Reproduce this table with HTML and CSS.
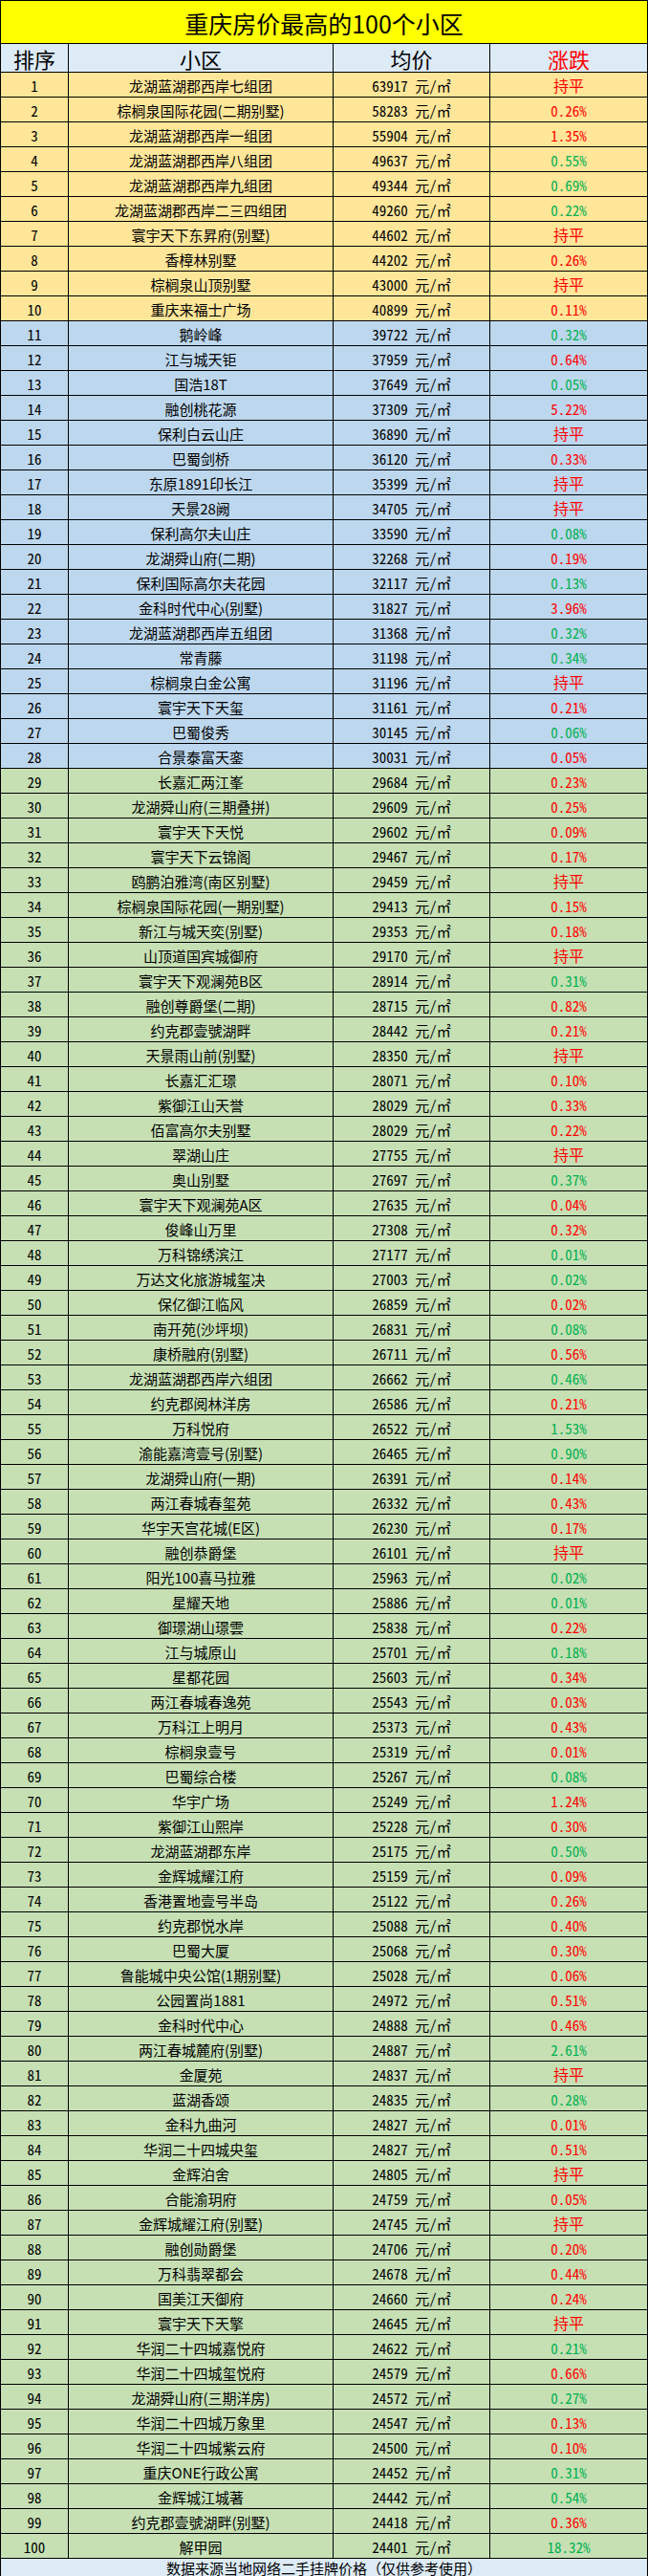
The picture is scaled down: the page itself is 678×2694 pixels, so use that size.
FILE: index.html
```html
<!DOCTYPE html>
<html lang="zh-CN">
<head>
<meta charset="utf-8">
<title>重庆房价最高的100个小区</title>
<link rel="stylesheet" href="styles.css">
</head>
<body>
<div class="sheet">
<div class="title">重庆房价最高的100个小区</div>
<div class="row head"><span>排序</span><span>小区</span><span>均价</span><span class="hot">涨跌</span></div>
<div class="row gold"><span>1</span><span>龙湖蓝湖郡西岸七组团</span><span>63917 元/㎡</span><span class="flat">持平</span></div>
<div class="row gold"><span>2</span><span>棕榈泉国际花园(二期别墅)</span><span>58283 元/㎡</span><span class="up">0.26%</span></div>
<div class="row gold"><span>3</span><span>龙湖蓝湖郡西岸一组团</span><span>55904 元/㎡</span><span class="up">1.35%</span></div>
<div class="row gold"><span>4</span><span>龙湖蓝湖郡西岸八组团</span><span>49637 元/㎡</span><span class="down">0.55%</span></div>
<div class="row gold"><span>5</span><span>龙湖蓝湖郡西岸九组团</span><span>49344 元/㎡</span><span class="down">0.69%</span></div>
<div class="row gold"><span>6</span><span>龙湖蓝湖郡西岸二三四组团</span><span>49260 元/㎡</span><span class="down">0.22%</span></div>
<div class="row gold"><span>7</span><span>寰宇天下东昇府(别墅)</span><span>44602 元/㎡</span><span class="flat">持平</span></div>
<div class="row gold"><span>8</span><span>香樟林别墅</span><span>44202 元/㎡</span><span class="up">0.26%</span></div>
<div class="row gold"><span>9</span><span>棕榈泉山顶别墅</span><span>43000 元/㎡</span><span class="flat">持平</span></div>
<div class="row gold"><span>10</span><span>重庆来福士广场</span><span>40899 元/㎡</span><span class="up">0.11%</span></div>
<div class="row blue"><span>11</span><span>鹅岭峰</span><span>39722 元/㎡</span><span class="down">0.32%</span></div>
<div class="row blue"><span>12</span><span>江与城天钜</span><span>37959 元/㎡</span><span class="up">0.64%</span></div>
<div class="row blue"><span>13</span><span>国浩18T</span><span>37649 元/㎡</span><span class="down">0.05%</span></div>
<div class="row blue"><span>14</span><span>融创桃花源</span><span>37309 元/㎡</span><span class="up">5.22%</span></div>
<div class="row blue"><span>15</span><span>保利白云山庄</span><span>36890 元/㎡</span><span class="flat">持平</span></div>
<div class="row blue"><span>16</span><span>巴蜀剑桥</span><span>36120 元/㎡</span><span class="up">0.33%</span></div>
<div class="row blue"><span>17</span><span>东原1891印长江</span><span>35399 元/㎡</span><span class="flat">持平</span></div>
<div class="row blue"><span>18</span><span>天景28阙</span><span>34705 元/㎡</span><span class="flat">持平</span></div>
<div class="row blue"><span>19</span><span>保利高尔夫山庄</span><span>33590 元/㎡</span><span class="down">0.08%</span></div>
<div class="row blue"><span>20</span><span>龙湖舜山府(二期)</span><span>32268 元/㎡</span><span class="up">0.19%</span></div>
<div class="row blue"><span>21</span><span>保利国际高尔夫花园</span><span>32117 元/㎡</span><span class="down">0.13%</span></div>
<div class="row blue"><span>22</span><span>金科时代中心(别墅)</span><span>31827 元/㎡</span><span class="up">3.96%</span></div>
<div class="row blue"><span>23</span><span>龙湖蓝湖郡西岸五组团</span><span>31368 元/㎡</span><span class="down">0.32%</span></div>
<div class="row blue"><span>24</span><span>常青藤</span><span>31198 元/㎡</span><span class="down">0.34%</span></div>
<div class="row blue"><span>25</span><span>棕榈泉白金公寓</span><span>31196 元/㎡</span><span class="flat">持平</span></div>
<div class="row blue"><span>26</span><span>寰宇天下天玺</span><span>31161 元/㎡</span><span class="up">0.21%</span></div>
<div class="row blue"><span>27</span><span>巴蜀俊秀</span><span>30145 元/㎡</span><span class="down">0.06%</span></div>
<div class="row blue"><span>28</span><span>合景泰富天銮</span><span>30031 元/㎡</span><span class="up">0.05%</span></div>
<div class="row green"><span>29</span><span>长嘉汇两江峯</span><span>29684 元/㎡</span><span class="up">0.23%</span></div>
<div class="row green"><span>30</span><span>龙湖舜山府(三期叠拼)</span><span>29609 元/㎡</span><span class="up">0.25%</span></div>
<div class="row green"><span>31</span><span>寰宇天下天悦</span><span>29602 元/㎡</span><span class="up">0.09%</span></div>
<div class="row green"><span>32</span><span>寰宇天下云锦阁</span><span>29467 元/㎡</span><span class="up">0.17%</span></div>
<div class="row green"><span>33</span><span>鸥鹏泊雅湾(南区别墅)</span><span>29459 元/㎡</span><span class="flat">持平</span></div>
<div class="row green"><span>34</span><span>棕榈泉国际花园(一期别墅)</span><span>29413 元/㎡</span><span class="up">0.15%</span></div>
<div class="row green"><span>35</span><span>新江与城天奕(别墅)</span><span>29353 元/㎡</span><span class="up">0.18%</span></div>
<div class="row green"><span>36</span><span>山顶道国宾城御府</span><span>29170 元/㎡</span><span class="flat">持平</span></div>
<div class="row green"><span>37</span><span>寰宇天下观澜苑B区</span><span>28914 元/㎡</span><span class="down">0.31%</span></div>
<div class="row green"><span>38</span><span>融创尊爵堡(二期)</span><span>28715 元/㎡</span><span class="up">0.82%</span></div>
<div class="row green"><span>39</span><span>约克郡壹號湖畔</span><span>28442 元/㎡</span><span class="up">0.21%</span></div>
<div class="row green"><span>40</span><span>天景雨山前(别墅)</span><span>28350 元/㎡</span><span class="flat">持平</span></div>
<div class="row green"><span>41</span><span>长嘉汇汇璟</span><span>28071 元/㎡</span><span class="up">0.10%</span></div>
<div class="row green"><span>42</span><span>紫御江山天誉</span><span>28029 元/㎡</span><span class="up">0.33%</span></div>
<div class="row green"><span>43</span><span>佰富高尔夫别墅</span><span>28029 元/㎡</span><span class="up">0.22%</span></div>
<div class="row green"><span>44</span><span>翠湖山庄</span><span>27755 元/㎡</span><span class="flat">持平</span></div>
<div class="row green"><span>45</span><span>奥山别墅</span><span>27697 元/㎡</span><span class="down">0.37%</span></div>
<div class="row green"><span>46</span><span>寰宇天下观澜苑A区</span><span>27635 元/㎡</span><span class="up">0.04%</span></div>
<div class="row green"><span>47</span><span>俊峰山万里</span><span>27308 元/㎡</span><span class="up">0.32%</span></div>
<div class="row green"><span>48</span><span>万科锦绣滨江</span><span>27177 元/㎡</span><span class="down">0.01%</span></div>
<div class="row green"><span>49</span><span>万达文化旅游城玺决</span><span>27003 元/㎡</span><span class="down">0.02%</span></div>
<div class="row green"><span>50</span><span>保亿御江临风</span><span>26859 元/㎡</span><span class="up">0.02%</span></div>
<div class="row green"><span>51</span><span>南开苑(沙坪坝)</span><span>26831 元/㎡</span><span class="down">0.08%</span></div>
<div class="row green"><span>52</span><span>康桥融府(别墅)</span><span>26711 元/㎡</span><span class="up">0.56%</span></div>
<div class="row green"><span>53</span><span>龙湖蓝湖郡西岸六组团</span><span>26662 元/㎡</span><span class="down">0.46%</span></div>
<div class="row green"><span>54</span><span>约克郡阅林洋房</span><span>26586 元/㎡</span><span class="up">0.21%</span></div>
<div class="row green"><span>55</span><span>万科悦府</span><span>26522 元/㎡</span><span class="down">1.53%</span></div>
<div class="row green"><span>56</span><span>渝能嘉湾壹号(别墅)</span><span>26465 元/㎡</span><span class="down">0.90%</span></div>
<div class="row green"><span>57</span><span>龙湖舜山府(一期)</span><span>26391 元/㎡</span><span class="up">0.14%</span></div>
<div class="row green"><span>58</span><span>两江春城春玺苑</span><span>26332 元/㎡</span><span class="up">0.43%</span></div>
<div class="row green"><span>59</span><span>华宇天宫花城(E区)</span><span>26230 元/㎡</span><span class="up">0.17%</span></div>
<div class="row green"><span>60</span><span>融创恭爵堡</span><span>26101 元/㎡</span><span class="flat">持平</span></div>
<div class="row green"><span>61</span><span>阳光100喜马拉雅</span><span>25963 元/㎡</span><span class="down">0.02%</span></div>
<div class="row green"><span>62</span><span>星耀天地</span><span>25886 元/㎡</span><span class="down">0.01%</span></div>
<div class="row green"><span>63</span><span>御璟湖山璟雲</span><span>25838 元/㎡</span><span class="up">0.22%</span></div>
<div class="row green"><span>64</span><span>江与城原山</span><span>25701 元/㎡</span><span class="down">0.18%</span></div>
<div class="row green"><span>65</span><span>星都花园</span><span>25603 元/㎡</span><span class="up">0.34%</span></div>
<div class="row green"><span>66</span><span>两江春城春逸苑</span><span>25543 元/㎡</span><span class="up">0.03%</span></div>
<div class="row green"><span>67</span><span>万科江上明月</span><span>25373 元/㎡</span><span class="up">0.43%</span></div>
<div class="row green"><span>68</span><span>棕榈泉壹号</span><span>25319 元/㎡</span><span class="up">0.01%</span></div>
<div class="row green"><span>69</span><span>巴蜀综合楼</span><span>25267 元/㎡</span><span class="down">0.08%</span></div>
<div class="row green"><span>70</span><span>华宇广场</span><span>25249 元/㎡</span><span class="up">1.24%</span></div>
<div class="row green"><span>71</span><span>紫御江山熙岸</span><span>25228 元/㎡</span><span class="up">0.30%</span></div>
<div class="row green"><span>72</span><span>龙湖蓝湖郡东岸</span><span>25175 元/㎡</span><span class="down">0.50%</span></div>
<div class="row green"><span>73</span><span>金辉城耀江府</span><span>25159 元/㎡</span><span class="up">0.09%</span></div>
<div class="row green"><span>74</span><span>香港置地壹号半岛</span><span>25122 元/㎡</span><span class="up">0.26%</span></div>
<div class="row green"><span>75</span><span>约克郡悦水岸</span><span>25088 元/㎡</span><span class="up">0.40%</span></div>
<div class="row green"><span>76</span><span>巴蜀大厦</span><span>25068 元/㎡</span><span class="up">0.30%</span></div>
<div class="row green"><span>77</span><span>鲁能城中央公馆(1期别墅)</span><span>25028 元/㎡</span><span class="up">0.06%</span></div>
<div class="row green"><span>78</span><span>公园置尚1881</span><span>24972 元/㎡</span><span class="up">0.51%</span></div>
<div class="row green"><span>79</span><span>金科时代中心</span><span>24888 元/㎡</span><span class="up">0.46%</span></div>
<div class="row green"><span>80</span><span>两江春城麓府(别墅)</span><span>24887 元/㎡</span><span class="down">2.61%</span></div>
<div class="row green"><span>81</span><span>金厦苑</span><span>24837 元/㎡</span><span class="flat">持平</span></div>
<div class="row green"><span>82</span><span>蓝湖香颂</span><span>24835 元/㎡</span><span class="down">0.28%</span></div>
<div class="row green"><span>83</span><span>金科九曲河</span><span>24827 元/㎡</span><span class="up">0.01%</span></div>
<div class="row green"><span>84</span><span>华润二十四城央玺</span><span>24827 元/㎡</span><span class="up">0.51%</span></div>
<div class="row green"><span>85</span><span>金辉泊舍</span><span>24805 元/㎡</span><span class="flat">持平</span></div>
<div class="row green"><span>86</span><span>合能渝玥府</span><span>24759 元/㎡</span><span class="up">0.05%</span></div>
<div class="row green"><span>87</span><span>金辉城耀江府(别墅)</span><span>24745 元/㎡</span><span class="flat">持平</span></div>
<div class="row green"><span>88</span><span>融创勋爵堡</span><span>24706 元/㎡</span><span class="up">0.20%</span></div>
<div class="row green"><span>89</span><span>万科翡翠都会</span><span>24678 元/㎡</span><span class="up">0.44%</span></div>
<div class="row green"><span>90</span><span>国美江天御府</span><span>24660 元/㎡</span><span class="up">0.24%</span></div>
<div class="row green"><span>91</span><span>寰宇天下天擎</span><span>24645 元/㎡</span><span class="flat">持平</span></div>
<div class="row green"><span>92</span><span>华润二十四城嘉悦府</span><span>24622 元/㎡</span><span class="down">0.21%</span></div>
<div class="row green"><span>93</span><span>华润二十四城玺悦府</span><span>24579 元/㎡</span><span class="up">0.66%</span></div>
<div class="row green"><span>94</span><span>龙湖舜山府(三期洋房)</span><span>24572 元/㎡</span><span class="down">0.27%</span></div>
<div class="row green"><span>95</span><span>华润二十四城万象里</span><span>24547 元/㎡</span><span class="up">0.13%</span></div>
<div class="row green"><span>96</span><span>华润二十四城紫云府</span><span>24500 元/㎡</span><span class="up">0.10%</span></div>
<div class="row green"><span>97</span><span>重庆ONE行政公寓</span><span>24452 元/㎡</span><span class="down">0.31%</span></div>
<div class="row green"><span>98</span><span>金辉城江城著</span><span>24442 元/㎡</span><span class="down">0.54%</span></div>
<div class="row green"><span>99</span><span>约克郡壹號湖畔(别墅)</span><span>24418 元/㎡</span><span class="up">0.36%</span></div>
<div class="row green"><span>100</span><span>解甲园</span><span>24401 元/㎡</span><span class="down">18.32%</span></div>
<div class="foot">数据来源当地网络二手挂牌价格（仅供参考使用）</div>
</div>
</body>
</html>
```

FILE: styles.css
```css
html, body {
  margin: 0;
  padding: 0;
  overflow: hidden;
}

body {
  font-family: "Noto Sans CJK SC", "Noto Sans", sans-serif;
  color: #000;
  background: #fff;
}

.sheet {
  width: 678px;
  box-sizing: border-box;
  display: flex;
  flex-direction: column;
  gap: 1px;
  padding: 1px 1px 0 1px;
  background: #000;
}

.title {
  height: 44px;
  background: #ffff00;
  display: flex;
  align-items: center;
  justify-content: center;
  font-size: 25px;
  line-height: 1.3;
  padding-top: 2px;
  box-sizing: border-box;
}

.row {
  display: grid;
  grid-template-columns: 70px 276px 163px 164px;
  gap: 1px;
  height: 25px;
}

.row > span {
  display: flex;
  align-items: center;
  justify-content: center;
  font-size: 15px;
  line-height: 1.4;
  white-space: nowrap;
  padding-top: 2px;
  box-sizing: border-box;
  overflow: visible;
}

.row > span:nth-child(1),
.row > span:nth-child(3),
.row > span:nth-child(4) {
  font-feature-settings: "hwid" 1;
}

.head {
  height: 29px;
}

.head > span {
  background: #ddebf7;
  font-size: 22px;
  line-height: 1.2;
  padding-top: 1px;
}

.head > span.hot {
  color: #ff0000;
}

.gold > span {
  background: #ffe699;
}

.blue > span {
  background: #bdd7ee;
}

.green > span {
  background: #c6e0b4;
}

.row > span.up {
  color: #ff0000;
}

.row > span.down {
  color: #00b050;
}

.row > span.flat {
  color: #ff0000;
  font-size: 16px;
  font-feature-settings: normal;
}

.foot {
  height: 18px;
  background: #ddebf7;
  display: flex;
  align-items: center;
  justify-content: center;
  font-size: 15px;
  line-height: 1;
  padding-top: 1px;
  box-sizing: border-box;
  overflow: hidden;
}
```
